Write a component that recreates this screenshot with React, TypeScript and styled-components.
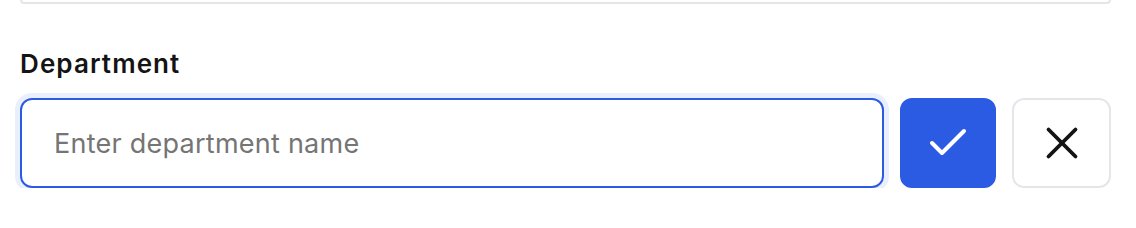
import styled, { createGlobalStyle } from 'styled-components'
import { Check, X } from 'lucide-react'

const GlobalStyle = createGlobalStyle`
    body {
        margin: 0;
        background: #ffffff;
        font-family: 'Inter', 'Noto Sans', sans-serif;
    }
`

const Page = styled.div`
    padding: 0 25px 0 20px;
`

const PrevField = styled.div`
    border: 2px solid #e6e6ea;
    border-top: none;
    border-radius: 0 0 14px 14px;
    height: 2px;
`

const Field = styled.div`
    display: flex;
    flex-direction: column;
    gap: 18px;
    margin-top: 44px;
`

const Label = styled.label`
    color: #141414;
    font-size: 26px;
    font-weight: 600;
    letter-spacing: 1.1px;
    line-height: 32px;
`

const Row = styled.div`
    display: flex;
    gap: 16px;
    height: 90px;
`

const Input = styled.input`
    flex: 1;
    box-sizing: border-box;
    border: 2px solid #2c5be3;
    border-radius: 12px;
    box-shadow: 0 0 0 5px #e9effc;
    color: #141414;
    font-family: 'Inter', 'Noto Sans', sans-serif;
    font-size: 27px;
    letter-spacing: 0.25px;
    outline: none;
    padding: 0 32px;

    ::placeholder {
        color: #7b7b7b;
    }
`

const IconButton = styled.button<{ $primary?: boolean }>`
    align-items: center;
    background: ${p => (p.$primary ? '#2c5be3' : '#ffffff')};
    border: 2px solid ${p => (p.$primary ? '#2c5be3' : '#e6e6ea')};
    border-radius: 12px;
    color: ${p => (p.$primary ? '#ffffff' : '#141414')};
    cursor: pointer;
    display: flex;
    justify-content: center;
    padding: 0;
    width: ${p => (p.$primary ? '96px' : '99px')};
`

function App() {
    return (
        <Page>
            <GlobalStyle />
            <PrevField />
            <Field>
                <Label htmlFor="department">Department</Label>
                <Row>
                    <Input id="department" placeholder="Enter department name" />
                    <IconButton $primary aria-label="Save">
                        <Check size={48} strokeWidth={2} />
                    </IconButton>
                    <IconButton aria-label="Cancel">
                        <X size={54} strokeWidth={1.7} />
                    </IconButton>
                </Row>
            </Field>
        </Page>
    )
}

export default App
